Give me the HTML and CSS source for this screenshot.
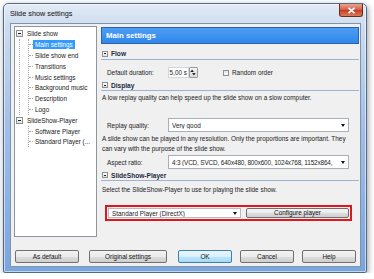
FILE: index.html
```html
<!DOCTYPE html>
<html lang="en">
<head>
    <meta charset="UTF-8">
    <meta name="viewport" content="width=device-width, initial-scale=1.0">
    <title>Slide show settings</title>
    <link rel="stylesheet" href="styles.css">
</head>
<body>
    <!-- Окно настроек слайд-шоу -->
    <div class="window">

        <!-- Заголовок окна -->
        <div class="titlebar">
            <span class="title">Slide show settings</span>
            <span class="close">
                <svg width="9" height="7" viewBox="0 0 9 7"><path d="M1.5 0.8 L7.5 6.2 M7.5 0.8 L1.5 6.2" stroke="#fff" stroke-width="1.7"/></svg>
            </span>
        </div>

        <div class="client">
            <div class="panes">

                <!-- Дерево разделов -->
                <div class="tree">
                    <div class="row"><span class="expander"></span><span class="node-text">Slide show</span></div>
                    <div class="branch">
                        <div class="children">
                            <div class="row child"><span class="node-text selected">Main settings</span></div>
                            <div class="row child"><span class="node-text">Slide show end</span></div>
                            <div class="row child"><span class="node-text">Transitions</span></div>
                            <div class="row child"><span class="node-text">Music settings</span></div>
                            <div class="row child"><span class="node-text">Background music</span></div>
                            <div class="row child"><span class="node-text">Description</span></div>
                            <div class="row child"><span class="node-text">Logo</span></div>
                        </div>
                    </div>
                    <div class="row"><span class="expander"></span><span class="node-text">SlideShow-Player</span></div>
                    <div class="branch last">
                        <div class="children">
                            <div class="row child"><span class="node-text">Software Player</span></div>
                            <div class="row child"><span class="node-text">Standard Player (...</span></div>
                        </div>
                    </div>
                </div>

                <!-- Основные настройки -->
                <div class="main">
                    <div class="page-title">Main settings</div>

                    <div class="section-head first"><span class="expander small"></span>Flow</div>
                    <div class="field duration">
                        <span class="field-label">Default duration:</span>
                        <span class="spin-edit">5,00 s</span>
                        <span class="spin-btn">
                            <svg width="9" height="11" viewBox="0 0 9 11"><path d="M1.5 5 L3.5 2 L5.5 5 Z" fill="#222"/><path d="M3.5 6 L5.5 9 L7.5 6 Z" fill="#222"/></svg>
                        </span>
                        <span class="checkbox"></span>
                        <span class="check-label">Random order</span>
                    </div>

                    <div class="section-head"><span class="expander small"></span>Display</div>
                    <p class="note">A low replay quality can help speed up the slide show on a slow computer.</p>
                    <div class="field quality">
                        <span class="field-label">Replay quality:</span>
                        <span class="combo"><span class="combo-text">Very good</span><span class="arrow"></span></span>
                    </div>
                    <p class="note two">A slide show can be played in any resolution. Only the proportions are important. They<br>can vary with the purpose of the slide show.</p>
                    <div class="field aspect">
                        <span class="field-label">Aspect ratio:</span>
                        <span class="combo"><span class="combo-text tight">4:3 (VCD, SVCD, 640x480, 800x600, 1024x768, 1152x864,</span><span class="arrow"></span></span>
                    </div>

                    <div class="section-head"><span class="expander small"></span>SlideShow-Player</div>
                    <p class="note select">Select the SlideShow-Player to use for playing the slide show.</p>
                    <div class="player-box">
                        <span class="combo player"><span class="combo-text">Standard Player (DirectX)</span><span class="arrow"></span></span>
                        <button class="btn configure" type="button">Configure player</button>
                    </div>
                </div>
            </div>

            <!-- Кнопки диалога -->
            <div class="buttons">
                <button class="btn as-default" type="button">As default</button>
                <button class="btn original" type="button">Original settings</button>
                <button class="btn ok" type="button">OK</button>
                <button class="btn" type="button">Cancel</button>
                <button class="btn" type="button">Help</button>
            </div>
        </div>
    </div>
</body>
</html>
```

FILE: styles.css
```css
/* Общие стили */
body {
    margin: 0;
    background-color: #fff;
    font-family: "Liberation Sans", Arial, sans-serif;
    font-size: 6.4px;
    color: #1b1b1b;
}

p {
    margin: 0;
}

/* Рамка окна */
.window {
    box-sizing: border-box;
    width: 364px;
    height: 270px;
    margin: 3px 0 0 3px;
    border: 1px solid #4f6a8b;
    border-radius: 5px 5px 2px 2px;
    background: linear-gradient(to bottom, #e3ebf5 0, #cddcef 22px, #a2c0e8 120px, #7aa5dd 100%);
    box-shadow: 1px 2px 6px rgba(0, 0, 0, 0.4), inset 0 0 0 1px rgba(255, 255, 255, 0.55);
}

.titlebar {
    height: 19px;
    display: flex;
    justify-content: space-between;
    align-items: flex-start;
}

.title {
    font-size: 7.3px;
    line-height: 19px;
    padding-left: 6px;
    color: #111;
}

.close {
    box-sizing: border-box;
    width: 24px;
    height: 13px;
    margin-right: 3px;
    border: 1px solid #6d2b1f;
    border-top: none;
    border-radius: 0 0 3px 3px;
    background: linear-gradient(#eaa493, #d35a40 50%, #c23b21 51%, #dc7a5c);
    display: flex;
    align-items: center;
    justify-content: center;
}

/* Клиентская область */
.client {
    box-sizing: border-box;
    width: 351px;
    height: 244px;
    margin-left: 6px;
    border: 1px solid #7e93ad;
    background-color: #f0f0f0;
    padding: 2px 1px 0 3px;
}

.panes {
    display: flex;
    gap: 4px;
    height: 211px;
}

/* Дерево */
.tree {
    box-sizing: border-box;
    width: 83px;
    border: 1px solid #8f959c;
    background-color: #fff;
    padding: 1.5px 0 0 0;
    white-space: nowrap;
    overflow: hidden;
}

.row {
    height: 10.8px;
    display: flex;
    align-items: center;
}

.expander {
    box-sizing: border-box;
    width: 7px;
    height: 7px;
    margin: 0 3px 0 1px;
    border: 1px solid #8e8f8f;
    background: linear-gradient(#fff, #e0e0e0);
    display: flex;
    align-items: center;
    justify-content: center;
    flex: 0 0 auto;
}

.expander::after {
    content: "";
    width: 3px;
    height: 1px;
    background-color: #222;
}

.node-text {
    padding: 0 1px;
    line-height: 9px;
}

.node-text.selected {
    padding: 0 2px;
    background-color: #3399ff;
    color: #fff;
}

.branch {
    margin-left: 4px;
    border-left: 1px dotted #a8a8a8;
}

.branch.last {
    border-left-color: transparent;
}

.children {
    margin-left: 8px;
    border-left: 1px dotted #a8a8a8;
}

.child::before {
    content: "";
    width: 4px;
    border-top: 1px dotted #a8a8a8;
    flex: 0 0 auto;
}

.child .node-text {
    padding: 0 2px;
}

/* Основная панель */
.main {
    flex: 1;
    display: flex;
    flex-direction: column;
    white-space: nowrap;
}

.page-title {
    box-sizing: border-box;
    margin-top: 1px;
    height: 17px;
    border: 1px solid #2b63b0;
    background: linear-gradient(#4d9df4, #3088ea);
    color: #fff;
    font-weight: bold;
    font-size: 7.8px;
    line-height: 15px;
    padding-left: 4px;
}

.section-head {
    height: 10px;
    display: flex;
    align-items: center;
    border-bottom: 1px solid #9db3d1;
    font-weight: bold;
    font-size: 6.6px;
    color: #1c2a3e;
    padding-left: 1px;
}

.section-head.first {
    margin-top: 4px;
    height: 11px;
}

.expander.small {
    width: 6px;
    height: 6px;
    margin: 0 3px 0 0;
}

.expander.small::after {
    width: 2px;
}

.field {
    height: 14px;
    display: flex;
    align-items: center;
}

.field-label {
    box-sizing: border-box;
    flex: 0 0 67px;
    padding-left: 6px;
}

.field.duration {
    margin-top: 6px;
    height: 13px;
}

.spin-edit {
    box-sizing: border-box;
    width: 21px;
    height: 11px;
    line-height: 9px;
    border: 1px solid #d3d7dc;
    background-color: #fff;
    text-align: right;
    padding-right: 1px;
}

.spin-btn {
    box-sizing: border-box;
    width: 9px;
    height: 11px;
    border: 1px solid #9a9a9a;
    border-radius: 1px;
    background: linear-gradient(#f6f6f6, #dcdcdc);
    display: flex;
}

.spin-btn svg {
    margin: -1px 0 0 -1px;
}

.checkbox {
    box-sizing: border-box;
    width: 6px;
    height: 6px;
    margin-left: 25px;
    border: 1px solid #8f8f8f;
    background: linear-gradient(#e4e4e4, #fafafa);
}

.check-label {
    margin-left: 3px;
}

.note {
    margin-top: 2px;
    padding-left: 1px;
    line-height: 10px;
}

.note.two {
    line-height: 9.5px;
}

.note.select {
    margin-top: 4px;
}

.field.quality {
    margin-top: 15px;
}

.field.aspect {
    margin-top: 2px;
}

.aspect + .section-head {
    margin-top: 1px;
}

.duration + .section-head {
    margin-top: 1px;
}

/* Выпадающие списки */
.combo {
    box-sizing: border-box;
    flex: 0 0 181px;
    height: 14px;
    border: 1px solid #a9afb7;
    background-color: #fff;
    display: flex;
    align-items: center;
    padding: 0 3px 0 3px;
    overflow: hidden;
}

.combo-text {
    flex: 1;
    overflow: hidden;
}

.combo-text.tight {
    letter-spacing: -0.15px;
}

.arrow {
    flex: 0 0 auto;
    margin-left: 2px;
    border-left: 2.5px solid transparent;
    border-right: 2.5px solid transparent;
    border-top: 3px solid #111;
}

/* Блок выбора плеера */
.player-box {
    box-sizing: border-box;
    margin: 10px 0 0 4px;
    width: 247px;
    height: 16px;
    border: 2px solid #e0161e;
    padding: 1px;
    display: flex;
    gap: 5px;
}

.combo.player {
    flex: 0 0 133px;
    height: 10px;
    border-color: #b5bac1;
}

/* Кнопки */
.btn {
    box-sizing: border-box;
    height: 13px;
    padding: 0;
    border: 1px solid #707070;
    border-radius: 2px;
    background: linear-gradient(#f3f3f3 0, #ebebeb 50%, #dddddd 51%, #cfcfcf 100%);
    font: inherit;
    color: #111;
    width: 54px;
}

.btn.configure {
    width: 103px;
    height: 10px;
    line-height: 8px;
}

.buttons {
    margin-top: 13px;
    padding: 0 3px 0 1px;
    display: flex;
    gap: 8px;
}

.btn.as-default {
    width: 64px;
    margin-right: 2px;
}

.btn.original {
    width: 78px;
}

.btn.ok {
    margin-left: auto;
    border-color: #3c7fb1;
    background: linear-gradient(#eaf6fd 0, #d9f0fc 50%, #bee6fd 51%, #a7d9f5 100%);
}
```
